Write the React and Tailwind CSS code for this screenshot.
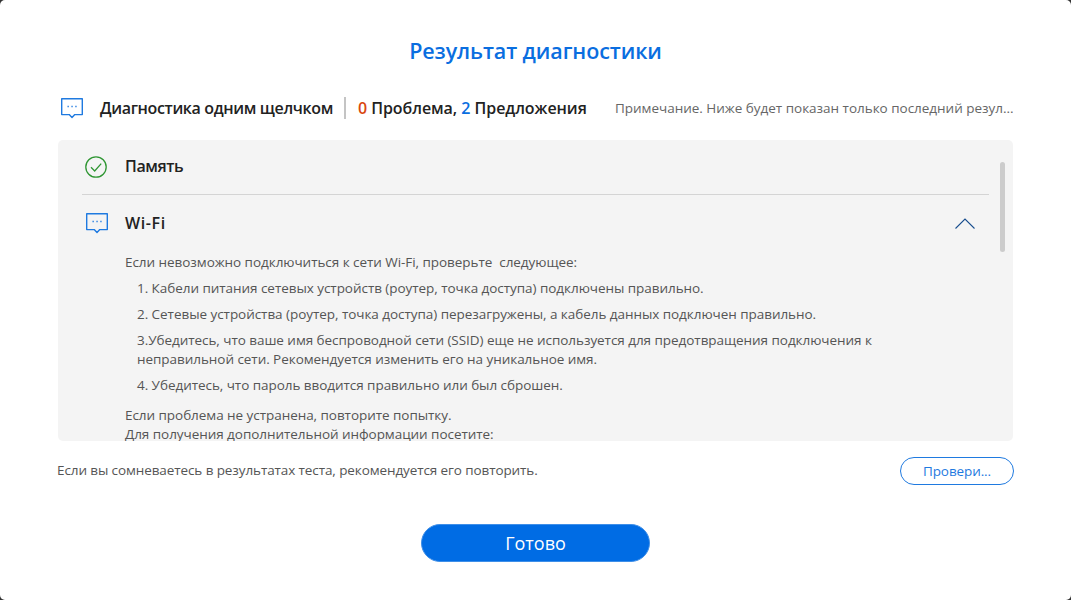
const F = { fontFamily: '"Open Sans", "Noto Sans", sans-serif' };

function Bubble({ className }) {
  return (
    <svg className={className} viewBox="0 0 22 21" fill="none" stroke="#1f7ae0" strokeWidth="1.4">
      <path d="M0.7 0.7H21.3V16.6H13.8L11 19.6L8.2 16.6H0.7Z" strokeLinejoin="round" />
      <path d="M6.5 8.5h1.3M10.4 8.5h1.3M14.3 8.5h1.3" strokeWidth="1.5" />
    </svg>
  );
}

export default function App() {
  return (
    <div className="w-[1071px] h-[600px] bg-[#333333] overflow-hidden" style={F}>
      <div className="w-full h-full bg-white rounded-[5px] flex flex-col px-[58px]">
        <h1 className="text-center text-[21.5px] leading-[30px] font-semibold text-[#0a6ee0] mt-[36px] tracking-[-0.1px]">Результат диагностики</h1>
        <div className="flex items-center mt-[27px] h-[30px] whitespace-nowrap">
          <Bubble className="w-[22px] h-[21px] shrink-0 ml-[3px] mr-[17px]" />
          <span className="text-[16px] font-semibold text-[#222] tracking-[-0.36px]">Диагностика одним щелчком</span>
          <span className="w-[2px] h-[22px] bg-[#c4c4c4] ml-[11px] mr-[12px]" />
          <span className="text-[16px] font-semibold text-[#222] tracking-[-0.05px]">
            <span className="text-[#d9480f]">0</span> Проблема, <span className="text-[#0a6ee0]">2</span> Предложения
          </span>
          <span className="ml-auto text-[13.5px] text-[#666] tracking-[-0.02px] w-[398px] overflow-hidden">Примечание. Ниже будет показан только последний резул...</span>
        </div>
        <div className="relative mt-[17px] h-[301px] bg-[#f4f4f4] rounded-[5px] overflow-hidden pl-[24px] pr-[24px]">
          <div className="flex items-center h-[55px] border-b border-[#d4d4d4] pl-[3px]">
            <svg className="w-[22px] h-[22px] mr-[18px]" viewBox="0 0 22 22" fill="none" stroke="#2f9633" strokeWidth="1.3">
              <circle cx="11" cy="11" r="10.2" />
              <path d="M6 11.3L9.7 15L16.2 7.6" />
            </svg>
            <span className="text-[16px] font-semibold text-[#222] tracking-[-0.4px] pb-[2px]">Память</span>
          </div>
          <div className="flex items-center h-[57px] pl-[4px]">
            <Bubble className="w-[22px] h-[21px] mr-[17px]" />
            <span className="text-[16px] font-semibold text-[#222] tracking-[0.6px] pb-[2px]">Wi-Fi</span>
            <svg className="w-5 h-[11px] ml-auto mr-[14px]" viewBox="0 0 20 11" fill="none" stroke="#1a4f8f" strokeWidth="1.1">
              <path d="M0.5 10.5L10 1L19.5 10.5" />
            </svg>
          </div>
          <div className="pl-[43px] pr-[100px] text-[13.5px] text-[#555] tracking-[-0.05px] leading-[19px] mt-[1px]">
            <p>Если невозможно подключиться к сети Wi-Fi, проверьте&nbsp; следующее:</p>
            <div className="pl-[12px] mt-[7px] flex flex-col gap-[7px]">
              <p>1. Кабели питания сетевых устройств (роутер, точка доступа) подключены правильно.</p>
              <p>2. Сетевые устройства (роутер, точка доступа) перезагружены, а кабель данных подключен правильно.</p>
              <p>3.Убедитесь, что ваше имя беспроводной сети (SSID) еще не используется для предотвращения подключения к неправильной сети. Рекомендуется изменить его на уникальное имя.</p>
              <p>4. Убедитесь, что пароль вводится правильно или был сброшен.</p>
            </div>
            <p className="mt-[11px]">Если проблема не устранена, повторите попытку.</p>
            <p>Для получения дополнительной информации посетите:</p>
          </div>
          <div className="absolute left-[942px] top-[22px] w-[5px] h-[90px] rounded-full bg-[#cccccc]" />
        </div>
        <div className="flex items-center justify-between mt-[16px] h-[28px] -mx-[1px]">
          <span className="text-[13.5px] text-[#555] tracking-[-0.1px] pb-[2px]">Если вы сомневаетесь в результатах теста, рекомендуется его повторить.</span>
          <button className="w-[114px] h-[28px] rounded-full border border-[#1f7ae0] text-[13.5px] text-[#1f7ae0] tracking-[-0.1px]">Провери...</button>
        </div>
        <button className="self-center mt-[39px] w-[229px] h-[38px] rounded-full bg-[#006ce4] border border-[#3f8fe8] text-white text-[18px]">Готово</button>
      </div>
    </div>
  );
}
